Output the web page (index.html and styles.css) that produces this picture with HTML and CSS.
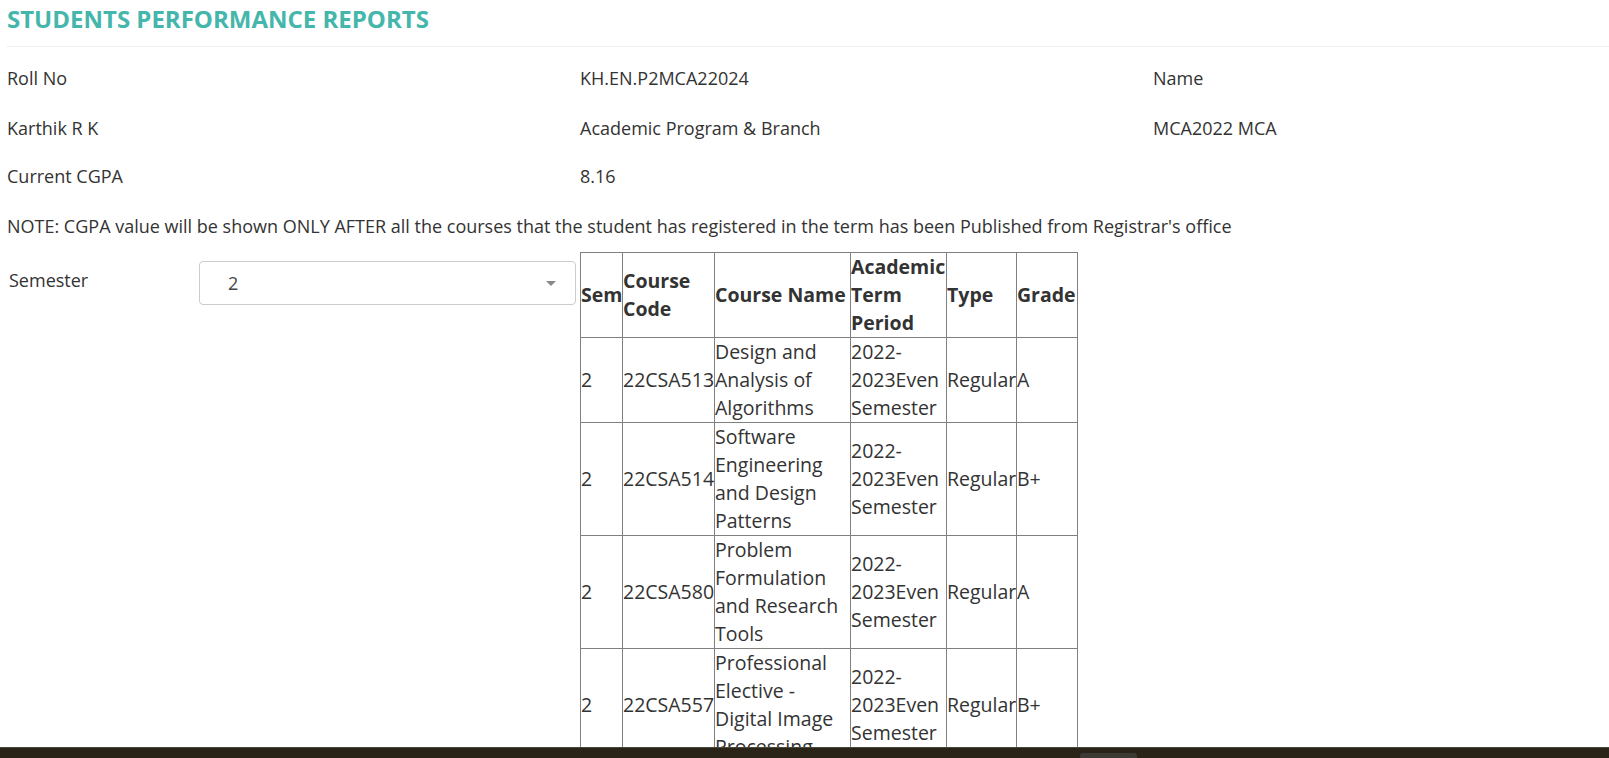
FILE: index.html
```html
<!DOCTYPE html>
<html>
<head>
<meta charset="utf-8">
<title>Students Performance Reports</title>
<link rel="stylesheet" href="styles.css">
</head>
<body>
<div class="page">
  <h1 class="title">STUDENTS PERFORMANCE REPORTS</h1>
  <div class="rule"></div>
  <div class="info">
    <div class="info-row r1"><span>Roll No</span><span>KH.EN.P2MCA22024</span><span>Name</span></div>
    <div class="info-row r2"><span>Karthik R K</span><span>Academic Program &amp; Branch</span><span>MCA2022 MCA</span></div>
    <div class="info-row r3"><span>Current CGPA</span><span>8.16</span><span></span></div>
  </div>
  <p class="note">NOTE: CGPA value will be shown ONLY AFTER all the courses that the student has registered in the term has been Published from Registrar's office</p>
  <div class="bottom">
    <div class="sem-label">Semester</div>
    <div class="select">
      <span class="select-value">2</span>
      <span class="caret"></span>
    </div>
    <table class="grades">
      <colgroup>
        <col class="c1"><col class="c2"><col class="c3"><col class="c4"><col class="c5"><col class="c6">
      </colgroup>
      <thead>
        <tr><th>Sem</th><th>Course Code</th><th>Course Name</th><th>Academic Term Period</th><th>Type</th><th>Grade</th></tr>
      </thead>
      <tbody>
        <tr><td>2</td><td>22CSA513</td><td>Design and Analysis of Algorithms</td><td>2022-2023Even Semester</td><td>Regular</td><td>A</td></tr>
        <tr><td>2</td><td>22CSA514</td><td>Software Engineering and Design Patterns</td><td>2022-2023Even Semester</td><td>Regular</td><td>B+</td></tr>
        <tr><td>2</td><td>22CSA580</td><td>Problem Formulation and Research Tools</td><td>2022-2023Even Semester</td><td>Regular</td><td>A</td></tr>
        <tr><td>2</td><td>22CSA557</td><td>Professional Elective - Digital Image Processing</td><td>2022-2023Even Semester</td><td>Regular</td><td>B+</td></tr>
      </tbody>
    </table>
  </div>
</div>
<div class="bottom-bar"><div class="bar-tab"></div></div>
</body>
</html>
```

FILE: styles.css
```css
html, body {
  margin: 0;
  padding: 0;
  background: #ffffff;
  overflow: hidden;
}
body {
  font-family: "Open Sans", "Liberation Sans", sans-serif;
  font-size: 18px;
  line-height: 28px;
  color: #333333;
}
.page {
  padding-left: 7px;
}
.title {
  margin: 2px 0 0 0;
  font-size: 24px;
  line-height: 34px;
  font-weight: 700;
  color: #45b6ab;
}
.rule {
  height: 1px;
  background: #eeeeee;
  margin-top: 10px;
}
.info {
  padding-top: 17px;
}
.info-row {
  display: grid;
  grid-template-columns: 573px 573px 1fr;
}
.r1 { height: 50px; }
.r2 { height: 48px; }
.r3 { height: 50px; }
.note {
  margin: 0;
  height: 40px;
}
.bottom {
  display: flex;
  align-items: flex-start;
}
.sem-label {
  width: 190px;
  padding-left: 2px;
  margin-top: 14px;
}
.select {
  box-sizing: border-box;
  width: 377px;
  height: 44px;
  margin-top: 9px;
  border: 1px solid #cccccc;
  border-radius: 4px;
  display: flex;
  align-items: center;
  justify-content: space-between;
  padding: 0 19px 0 28px;
}
.select-value {
  color: #444444;
}
.caret {
  width: 0;
  height: 0;
  border-left: 5px solid transparent;
  border-right: 5px solid transparent;
  border-top: 5px solid #888888;
}
.grades {
  margin-left: 4px;
  border-collapse: collapse;
  table-layout: fixed;
  width: 497px;
}
.c1 { width: 42px; }
.c2 { width: 92px; }
.c3 { width: 136px; }
.c4 { width: 96px; }
.c5 { width: 70px; }
.c6 { width: 61px; }
.grades th, .grades td {
  border: 1px solid #808080;
  padding: 0;
  text-align: left;
  vertical-align: middle;
  font-size: 19.5px;
  line-height: 28px;
  overflow: hidden;
  white-space: normal;
}
.grades th {
  font-weight: 700;
}
.bottom-bar {
  position: fixed;
  left: 0;
  right: 0;
  bottom: 0;
  height: 10px;
  background: #2a2418;
  border-top: 1px solid #4a463a;
}
.bar-tab {
  position: absolute;
  left: 1080px;
  top: 5px;
  width: 57px;
  height: 6px;
  background: #3b3a35;
  border-radius: 3px 3px 0 0;
}
```
